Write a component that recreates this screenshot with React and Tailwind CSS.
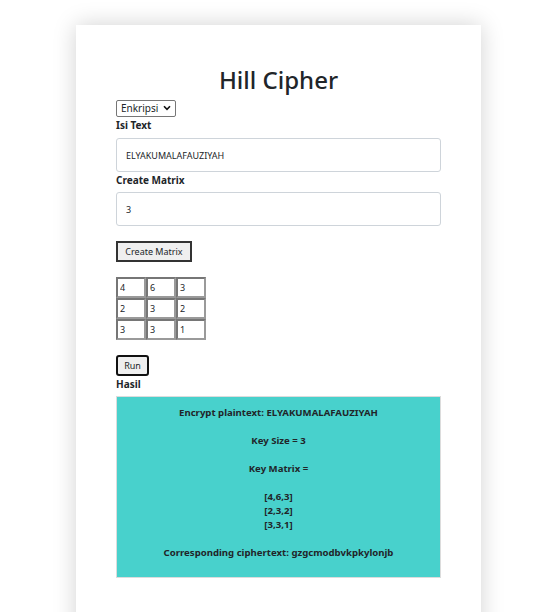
import { useState } from 'react';

export default function App() {
    const [mode, setMode] = useState('enkripsi');
    const [text, setText] = useState('ELYAKUMALAFAUZIYAH');
    const [size, setSize] = useState('3');
    const [matrix, setMatrix] = useState([
        ['4', '6', '3'],
        ['2', '3', '2'],
        ['3', '3', '1'],
    ]);

    const setCell = (r, c, v) => {
        const next = matrix.map((row) => [...row]);
        next[r][c] = v;
        setMatrix(next);
    };

    return (
        <div className="min-h-screen bg-white pt-[25px] font-['Noto_Sans',sans-serif] text-[#212529]">
            <div className="ml-[76px] min-h-[640px] w-[405px] bg-white px-[40px] pt-[39px] shadow-[0_0_22px_rgba(0,0,0,0.18)]">
                <h1 className="text-center text-[24px] font-medium leading-[32px]">Hill Cipher</h1>

                <div className="relative mt-[4px] h-[17px] w-[60px]">
                    <select
                        value={mode} onChange={(e) => setMode(e.target.value)}
                        className="block h-[17px] w-[60px] appearance-none rounded-[2px] border border-[#767676] bg-white pl-[4px] text-[10px] leading-[15px] text-[#212529]"
                    >
                        <option value="enkripsi">Enkripsi</option>
                        <option value="dekripsi">Dekripsi</option>
                    </select>
                    <svg className="pointer-events-none absolute right-[5px] top-[5px]" width="8" height="6" viewBox="0 0 8 6">
                        <path d="M1 1.2 L4 4.3 L7 1.2" fill="none" stroke="#111" strokeWidth="1.6" />
                    </svg>
                </div>

                <label className="mt-[1px] block text-[10px] font-bold leading-[14px]">Isi Text</label>
                <input
                    value={text} onChange={(e) => setText(e.target.value)}
                    className="mt-[6px] block h-[34px] w-full rounded-[3px] border border-[#ced4da] px-[9px] text-[9px] text-[#212529] outline-none"
                />

                <label className="mt-[1px] block text-[10px] font-bold leading-[14px]">Create Matrix</label>
                <input
                    value={size} onChange={(e) => setSize(e.target.value)}
                    className="mt-[5px] block h-[34px] w-full rounded-[3px] border border-[#ced4da] px-[9px] text-[9px] text-[#212529] outline-none"
                />

                <button className="mt-[15px] block h-[21px] w-[76px] border-2 border-[#333] bg-[#efefef] text-[9px] text-[#212529]">
                    Create Matrix
                </button>

                <div className="mt-[15px] flex flex-col">
                    {matrix.map((row, r) => (
                        <div key={r} className="flex">
                            {row.map((v, c) => (
                                <input
                                    key={c}
                                    value={v} onChange={(e) => setCell(r, c, e.target.value)}
                                    className="h-[21px] w-[30px] border-2 border-t-[#767676] border-l-[#767676] border-r-[#9a9a9a] border-b-[#9a9a9a] px-[2px] text-[9px] text-[#212529] outline-none"
                                />
                            ))}
                        </div>
                    ))}
                </div>

                <button className="mt-[15px] block h-[21px] w-[33px] rounded-[3px] border-2 border-[#111] bg-[#efefef] text-[9px] text-[#212529]">
                    Run
                </button>

                <label className="mt-[1px] block text-[10px] font-bold leading-[14px]">Hasil</label>
                <div className="mt-[5px] h-[182px] border border-[#dcdcdc] bg-[#48d1cc] pt-[9px] text-center text-[9.6px] font-bold leading-[14px]">
                    <p>Encrypt plaintext: {text}</p>
                    <br />
                    <p>Key Size = {size}</p>
                    <br />
                    <p>Key Matrix =</p>
                    <br />
                    {matrix.map((row, r) => (
                        <p key={r}>[{row.join(',')}]</p>
                    ))}
                    <br />
                    <p>Corresponding ciphertext: gzgcmodbvkpkylonjb</p>
                </div>
            </div>
        </div>
    );
}
